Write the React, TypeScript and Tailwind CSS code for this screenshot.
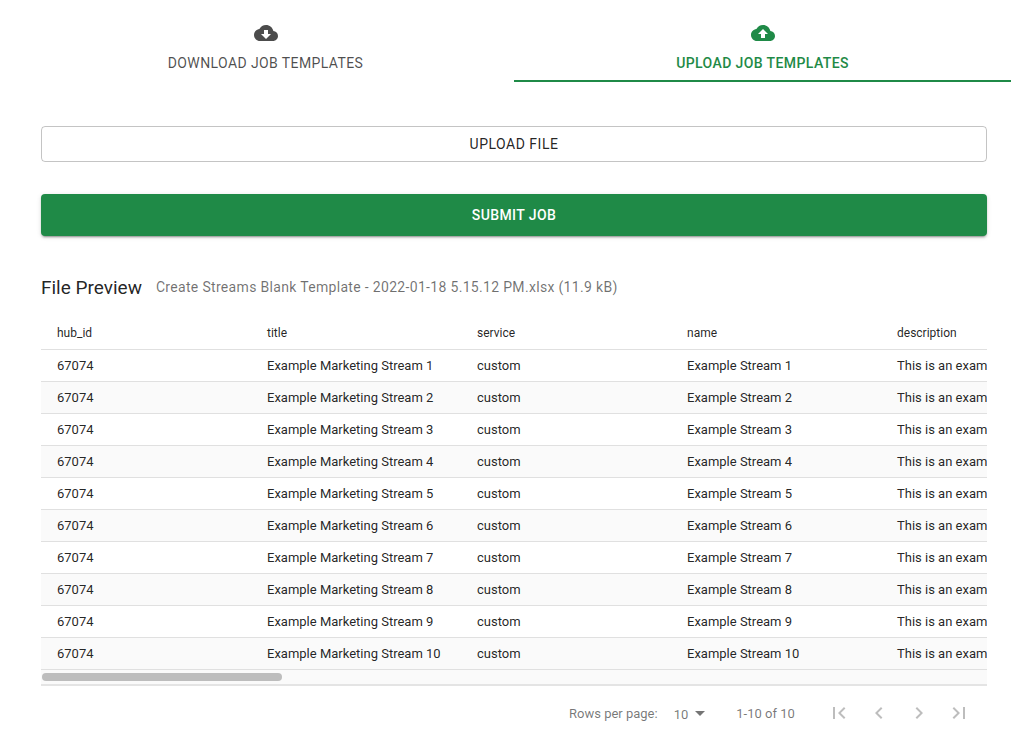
import React from "react";

const green = "text-[#1f8a47]";

const rows = [1, 2, 3, 4, 5, 6, 7, 8, 9, 10];

function MuiIcon({ d, className }: { d: string; className: string }) {
  return (
    <svg viewBox="0 0 24 24" fill="currentColor" className={className}>
      <path d={d} />
    </svg>
  );
}

const cloudDown =
  "M19.35 10.04C18.67 6.59 15.64 4 12 4 9.11 4 6.6 5.64 5.35 8.04 2.34 8.36 0 10.91 0 14c0 3.31 2.69 6 6 6h13c2.76 0 5-2.24 5-5 0-2.64-2.05-4.78-4.65-4.96zM17 13l-5 5-5-5h3V9h4v4h3z";
const cloudUp =
  "M19.35 10.04C18.67 6.59 15.64 4 12 4 9.11 4 6.6 5.64 5.35 8.04 2.34 8.36 0 10.91 0 14c0 3.31 2.69 6 6 6h13c2.76 0 5-2.24 5-5 0-2.64-2.05-4.78-4.65-4.96zM14 13v4h-4v-4H7l5-5 5 5h-3z";

const pagerIcons = [
  "M18.41 16.59L13.82 12l4.59-4.59L17 6l-6 6 6 6zM6 6h2v12H6z",
  "M15.41 16.59L10.83 12l4.58-4.59L14 6l-6 6 6 6 1.41-1.41z",
  "M8.59 16.59L13.17 12 8.59 7.41 10 6l6 6-6 6-1.41-1.41z",
  "M5.59 7.41L10.18 12l-4.59 4.59L7 18l6-6-6-6zM16 6h2v12h-2z",
];

export default function App() {
  return (
    <div className="min-h-screen bg-white font-['Roboto',sans-serif] text-[#000000de] overflow-hidden">
      {/* tabs */}
      <div className="flex ml-[17px] mr-[18px]">
        <div className="w-1/2 h-[82px] flex flex-col items-center pt-[21px] text-[#000000b3]">
          <MuiIcon d={cloudDown} className="w-6 h-6" />
          <span className="mt-2 text-sm leading-[20px] tracking-[0.4px]">DOWNLOAD JOB TEMPLATES</span>
        </div>
        <div className={`w-1/2 h-[82px] flex flex-col items-center pt-[21px] border-b-2 border-[#1f8a47] ${green}`}>
          <MuiIcon d={cloudUp} className="w-6 h-6" />
          <span className="mt-2 text-sm leading-[20px] tracking-[0.4px] font-medium">UPLOAD JOB TEMPLATES</span>
        </div>
      </div>

      <div className="ml-[41px] w-[946px]">
        <button className="mt-[44px] w-full h-9 rounded border border-[#0000003b] text-sm font-normal tracking-[0.5px] text-[#000000de] flex items-center justify-center">
          UPLOAD FILE
        </button>
        <button className="mt-8 w-full h-[42px] rounded bg-[#1f8a47] text-white text-sm font-medium tracking-[0.4px] shadow-[0_3px_1px_-2px_rgba(0,0,0,0.2),0_2px_2px_0_rgba(0,0,0,0.14),0_1px_5px_0_rgba(0,0,0,0.12)] flex items-center justify-center">
          SUBMIT JOB
        </button>

        <div className="mt-[37px] flex items-center h-[28px]">
          <h2 className="text-[19px] font-normal leading-[28px] mt-px">File Preview</h2>
          <span className="ml-[14px] text-sm tracking-[0.32px] text-[#0000008f]">
            Create Streams Blank Template - 2022-01-18 5.15.12 PM.xlsx (11.9 kB)
          </span>
        </div>

        {/* table */}
        <div className="mt-[15px] overflow-hidden border-b-2 border-[#e4e4e4]">
          <div className="w-[1100px] text-xs">
            <div className="grid grid-cols-[210px_210px_210px_210px_260px] h-[34px] items-center border-b border-[#e0e0e0] text-xs">
              <div className="pl-4">hub_id</div>
              <div className="pl-4">title</div>
              <div className="pl-4">service</div>
              <div className="pl-4">name</div>
              <div className="pl-4">description</div>
            </div>
            {rows.map((n) => (
              <div
                key={n}
                className={`grid grid-cols-[210px_210px_210px_210px_260px] h-8 items-center border-b border-[#e0e0e0] text-[13px] ${n % 2 === 0 ? "bg-[#fafafa]" : "bg-white"}`}
              >
                <div className="pl-4">67074</div>
                <div className="pl-4">Example Marketing Stream {n}</div>
                <div className="pl-4">custom</div>
                <div className="pl-4">Example Stream {n}</div>
                <div className="pl-4 whitespace-nowrap">This is an example stream</div>
              </div>
            ))}
          </div>
          {/* scrollbar */}
          <div className="h-[14px] bg-[#fafafa] px-px pt-[3px]">
            <div className="w-[240px] h-2 rounded bg-[#bdbdbd]"></div>
          </div>
        </div>

        {/* pagination */}
        <div className="flex items-center h-[54px] text-[13px] text-[#0000008a]">
          <span className="ml-[528px] mt-px">Rows per page:</span>
          <span className="ml-4 mt-[3px]">10</span>
          <svg viewBox="0 0 24 24" fill="currentColor" className="w-6 h-6 text-[#0000008a]">
            <path d="M7 10l5 5 5-5z" />
          </svg>
          <span className="ml-6 mt-px w-[58px] whitespace-nowrap">1-10 of 10</span>
          <div className="ml-[33px] flex gap-4 text-[#00000042]">
            {pagerIcons.map((d) => (
              <MuiIcon key={d} d={d} className="w-6 h-6" />
            ))}
          </div>
        </div>
      </div>
    </div>
  );
}
